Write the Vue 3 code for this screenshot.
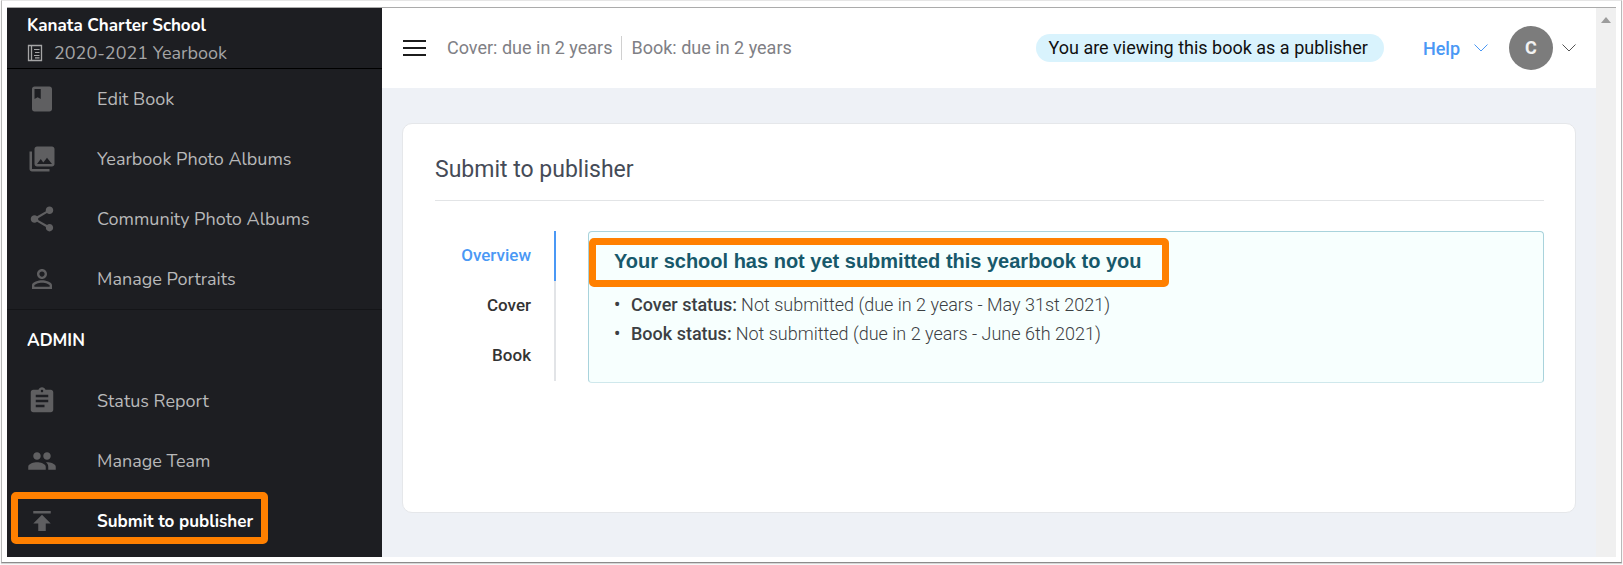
<script setup>
import { ref } from 'vue'

const icons = {
  book: 'M18 2H6c-1.1 0-2 .9-2 2v16c0 1.1.9 2 2 2h12c1.1 0 2-.9 2-2V4c0-1.1-.9-2-2-2zM6 4h5v8l-2.500-1.500L6 12V4z',
  photos: 'M22 16V4c0-1.1-.9-2-2-2H8c-1.1 0-2 .9-2 2v12c0 1.1.9 2 2 2h12c1.100 0 2-.9 2-2zm-11-4l2.030 2.710L16 11l4 5H8l3-4zM2 6v14c0 1.100.9 2 2 2h14v-2H4V6H2z',
  share: 'M18 16.080c-.76 0-1.440.3-1.960.77L8.910 12.700c.05-.23.09-.46.09-.7s-.04-.47-.09-.7l7.050-4.110c.54.5 1.250.81 2.040.81 1.660 0 3-1.340 3-3s-1.340-3-3-3-3 1.340-3 3c0 .24.04.47.09.7L8.040 9.810C7.500 9.310 6.790 9 6 9c-1.660 0-3 1.340-3 3s1.340 3 3 3c.79 0 1.500-.31 2.040-.81l7.120 4.160c-.05.21-.08.43-.08.65 0 1.610 1.310 2.920 2.920 2.920s2.920-1.310 2.920-2.920-1.310-2.920-2.920-2.920z',
  person: 'M12 5.900c1.160 0 2.100.94 2.100 2.100s-.94 2.100-2.100 2.100S9.900 9.160 9.900 8s.94-2.100 2.100-2.100m0 9c2.970 0 6.100 1.460 6.100 2.100v1.100H5.900V17c0-.64 3.130-2.100 6.100-2.100M12 4C9.790 4 8 5.790 8 8s1.790 4 4 4 4-1.790 4-4-1.790-4-4-4zm0 9c-2.670 0-8 1.340-8 4v3h16v-3c0-2.660-5.330-4-8-4z',
  report: 'M19 3h-4.180C14.400 1.840 13.300 1 12 1c-1.300 0-2.400.84-2.820 2H5c-1.100 0-2 .9-2 2v14c0 1.100.9 2 2 2h14c1.100 0 2-.9 2-2V5c0-1.100-.9-2-2-2zm-7 0c.55 0 1 .45 1 1s-.45 1-1 1-1-.45-1-1 .45-1 1-1zm2 14H7v-2h7v2zm3-4H7v-2h10v2zm0-4H7V7h10v2z',
  team: 'M16 11c1.660 0 2.990-1.340 2.990-3S17.660 5 16 5c-1.660 0-3 1.340-3 3s1.340 3 3 3zm-8 0c1.660 0 2.990-1.340 2.990-3S9.660 5 8 5C6.340 5 5 6.340 5 8s1.340 3 3 3zm0 2c-2.330 0-7 1.170-7 3.500V19h14v-2.500c0-2.330-4.670-3.500-7-3.500zm8 0c-.29 0-.62.02-.97.05 1.160.84 1.970 1.970 1.970 3.450V19h6v-2.500c0-2.330-4.670-3.500-7-3.500z',
  publish: 'M5 4v2h14V4H5zm0 10h4v6h6v-6h4l-7-7-7 7z'
}

const mainLinks = [
  { icon: 'book', label: 'Edit Book' },
  { icon: 'photos', label: 'Yearbook Photo Albums' },
  { icon: 'share', label: 'Community Photo Albums' },
  { icon: 'person', label: 'Manage Portraits' }
]
const adminLinks = [
  { icon: 'report', label: 'Status Report' },
  { icon: 'team', label: 'Manage Team' },
  { icon: 'publish', label: 'Submit to publisher', current: true }
]

const tabs = ['Overview', 'Cover', 'Book']
const activeTab = ref('Overview')

const statuses = [
  { name: 'Cover status:', text: 'Not submitted (due in 2 years - May 31st 2021)' },
  { name: 'Book status:', text: 'Not submitted (due in 2 years - June 6th 2021)' }
]
</script>

<template>
  <div class="page">
    <div class="frame">
      <div class="app">
        <aside class="sidebar">
          <div class="school">
            <div class="school-name">Kanata Charter School</div>
            <div class="school-book">
              <svg class="book-icon" viewBox="0 0 16 18" fill="none" stroke="currentColor" aria-hidden="true">
                <path d="M1.500 1.500h13v15h-13zM4.500 1.500v15" stroke-width="1.300" />
                <path d="M7 5.500h5.500M8 8.500h4.500M7 11.500h5.500M8 13.800h4.500" stroke-width="1.200" />
              </svg>
              <span>2020-2021 Yearbook</span>
            </div>
          </div>
          <nav class="nav main-nav" aria-label="Book">
            <a v-for="link in mainLinks" :key="link.label" href="#" class="nav-link">
              <svg class="nav-icon" viewBox="0 0 24 24" aria-hidden="true"><path :d="icons[link.icon]" /></svg>
              <span>{{ link.label }}</span>
            </a>
          </nav>
          <h2 class="nav-heading">ADMIN</h2>
          <nav class="nav" aria-label="Admin">
            <a v-for="link in adminLinks" :key="link.label" href="#" class="nav-link" :class="{ current: link.current }">
              <svg class="nav-icon" viewBox="0 0 24 24" aria-hidden="true"><path :d="icons[link.icon]" /></svg>
              <span>{{ link.label }}</span>
            </a>
          </nav>
        </aside>

        <div class="main">
          <header class="topbar">
            <button class="menu" type="button" aria-label="Toggle menu">
              <svg viewBox="0 0 23 16" aria-hidden="true"><path d="M0 0h23v2H0zM0 7h23v2H0zM0 14h23v2H0z" /></svg>
            </button>
            <div class="due">
              <span>Cover: due in 2 years</span>
              <span>Book: due in 2 years</span>
            </div>
            <div class="pill">You are viewing this book as a publisher</div>
            <button class="help" type="button">
              Help
              <svg class="chevron" viewBox="0 0 14 8" aria-hidden="true"><path d="M0.500 0.500L7 7l6.500-6.500" /></svg>
            </button>
            <button class="account" type="button" aria-label="Account">
              <span class="avatar">C</span>
              <svg class="chevron" viewBox="0 0 14 8" aria-hidden="true"><path d="M0.500 0.500L7 7l6.500-6.500" /></svg>
            </button>
          </header>

          <main class="content">
            <section class="card">
              <h1>Submit to publisher</h1>
              <div class="panes">
                <div class="tabs" role="tablist">
                  <button
                    v-for="tab in tabs"
                    :key="tab"
                    type="button"
                    role="tab"
                    class="tab"
                    :class="{ active: tab === activeTab }"
                    :aria-selected="tab === activeTab"
                    @click="activeTab = tab"
                  >{{ tab }}</button>
                </div>
                <div class="notice">
                  <h3>Your school has not yet submitted this yearbook to you</h3>
                  <ul>
                    <li v-for="s in statuses" :key="s.name"><strong>{{ s.name }}</strong> {{ s.text }}</li>
                  </ul>
                </div>
              </div>
            </section>
          </main>
        </div>

        <div class="scrollbar" aria-hidden="true">
          <svg viewBox="0 0 10 6"><path d="M5 0l5 6H0z" /></svg>
        </div>
      </div>
    </div>
  </div>
</template>

<style>
body {
  margin: 0;
  background: #fff;
}
</style>

<style scoped>
*,
*::before,
*::after {
  box-sizing: border-box;
}
.page {
  min-height: 100vh;
  padding: 0 1px 2px;
  display: flex;
  font-family: Roboto, "Liberation Sans", sans-serif;
  font-size: 18px;
}
.frame {
  flex: 1;
  display: flex;
  padding: 6px 5px 5px;
  border: 1px solid #b9b9b9;
  border-top-color: #e6e6e6;
  border-bottom-color: #8c8c8c;
  box-shadow: 0 1px 1px #d5d5d5;
}
.app {
  flex: 1;
  display: flex;
  border-top: 1px solid #ababab;
}
button {
  font: inherit;
  background: none;
  border: 0;
  padding: 0;
  cursor: pointer;
}

.sidebar {
  width: 375px;
  flex: none;
  background: #1d1e22;
  font-family: Nunito, "Noto Sans", sans-serif;
  color: #b8b8b9;
}
.school {
  height: 61px;
  padding: 4px 20px 0;
  border-bottom: 1px solid #000;
}
.school-name {
  line-height: 28px;
  font-size: 17px;
  font-weight: 700;
  color: #fff;
}
.school-book {
  display: flex;
  align-items: center;
  gap: 11px;
  line-height: 26px;
  color: #a5a5a6;
}
.book-icon {
  width: 16px;
  height: 18px;
}
.main-nav {
  border-bottom: 1px solid #141518;
}
.nav-link {
  position: relative;
  display: flex;
  align-items: center;
  gap: 40px;
  height: 60px;
  padding-left: 20px;
  color: inherit;
  text-decoration: none;
}
.nav-icon {
  width: 30px;
  height: 30px;
  fill: #5f5f61;
}
.nav-heading {
  margin: 0;
  padding: 1px 0 0 20px;
  line-height: 60px;
  font-size: 17px;
  font-weight: 700;
  color: #fff;
}
.current {
  color: #fff;
  font-size: 17px;
  font-weight: 700;
}
.current::after {
  content: "";
  position: absolute;
  left: 4px;
  top: 1px;
  width: 257px;
  height: 52px;
  border: 7px solid #ff8000;
  border-radius: 5px;
}

.main {
  flex: 1;
  min-width: 0;
  display: flex;
  flex-direction: column;
  background: #eef1f6;
}
.topbar {
  display: flex;
  align-items: center;
  height: 80px;
  padding: 0 20px 0 21px;
  background: #fff;
}
.menu {
  display: flex;
}
.menu svg {
  width: 23px;
  height: 16px;
  fill: #1c1c1c;
}
.due {
  display: flex;
  margin-left: 21px;
  line-height: 24px;
  color: #808085;
}
.due span + span {
  margin-left: 8px;
  padding-left: 10px;
  border-left: 1px solid #d0d0d0;
}
.pill {
  margin-left: auto;
  padding: 0 16px 0 12px;
  line-height: 28px;
  border-radius: 14px;
  background: #d9f3fd;
  color: #111;
}
.help {
  display: flex;
  align-items: center;
  gap: 14px;
  margin-left: 39px;
  font-weight: 500;
  color: #4a98f5;
}
.chevron {
  width: 14px;
  height: 8px;
  fill: none;
  stroke: currentColor;
}
.account {
  display: flex;
  align-items: center;
  gap: 9px;
  margin-left: 21px;
  color: #555;
}
.avatar {
  width: 44px;
  height: 44px;
  line-height: 44px;
  border-radius: 50%;
  background: #7c7c7c;
  color: #f2f2f2;
  font-weight: 700;
}

.content {
  flex: 1;
  padding: 35px 20px 44px;
  display: flex;
}
.card {
  flex: 1;
  padding: 17px 31px 16px 32px;
  border: 1px solid #e5e7ea;
  border-radius: 10px;
  background: #fff;
}
h1 {
  margin: 0;
  padding-bottom: 1px;
  line-height: 58px;
  font-size: 23px;
  font-weight: 400;
  color: #454b57;
  border-bottom: 1px solid #e2e4e6;
}
.panes {
  display: flex;
  align-items: flex-start;
  margin-top: 30px;
}
.tabs {
  display: flex;
  flex-direction: column;
  width: 121px;
  margin-right: 32px;
}
.tab {
  height: 50px;
  padding: 0 23px 2px 0;
  text-align: right;
  font-size: 17px;
  font-weight: 500;
  color: #333;
  border-right: 2px solid #e2e4e7;
}
.tab.active {
  color: #4a98f5;
  border-right-color: #4a98f5;
}
.notice {
  flex: 1;
  min-height: 152px;
  padding: 14px 25px;
  border: 1px solid #a9d3dc;
  border-bottom-color: #cfe8ec;
  border-radius: 4px;
  background: #f7fffe;
}
h3 {
  position: relative;
  width: max-content;
  margin: 0 0 14px;
  line-height: 30px;
  font-family: "Liberation Sans", Arial, sans-serif;
  font-size: 20px;
  font-weight: 700;
  color: #17596b;
}
h3::after {
  content: "";
  position: absolute;
  inset: -8px -28px -11px -25px;
  border: 7px solid #ff8000;
  border-radius: 5px;
}
ul {
  margin: 0;
  padding: 0;
  list-style: none;
}
li {
  display: flex;
  gap: 4px;
  line-height: 29px;
  font-weight: 300;
  color: #3c4043;
}
li::before {
  content: "•";
  width: 13px;
  font-weight: 500;
}
strong {
  font-weight: 500;
}

.scrollbar {
  width: 20px;
  flex: none;
  padding-top: 9px;
  text-align: center;
  line-height: 0;
  background: #f0f0f0;
}
.scrollbar svg {
  width: 10px;
  height: 6px;
  fill: #9c9c9c;
}
</style>
